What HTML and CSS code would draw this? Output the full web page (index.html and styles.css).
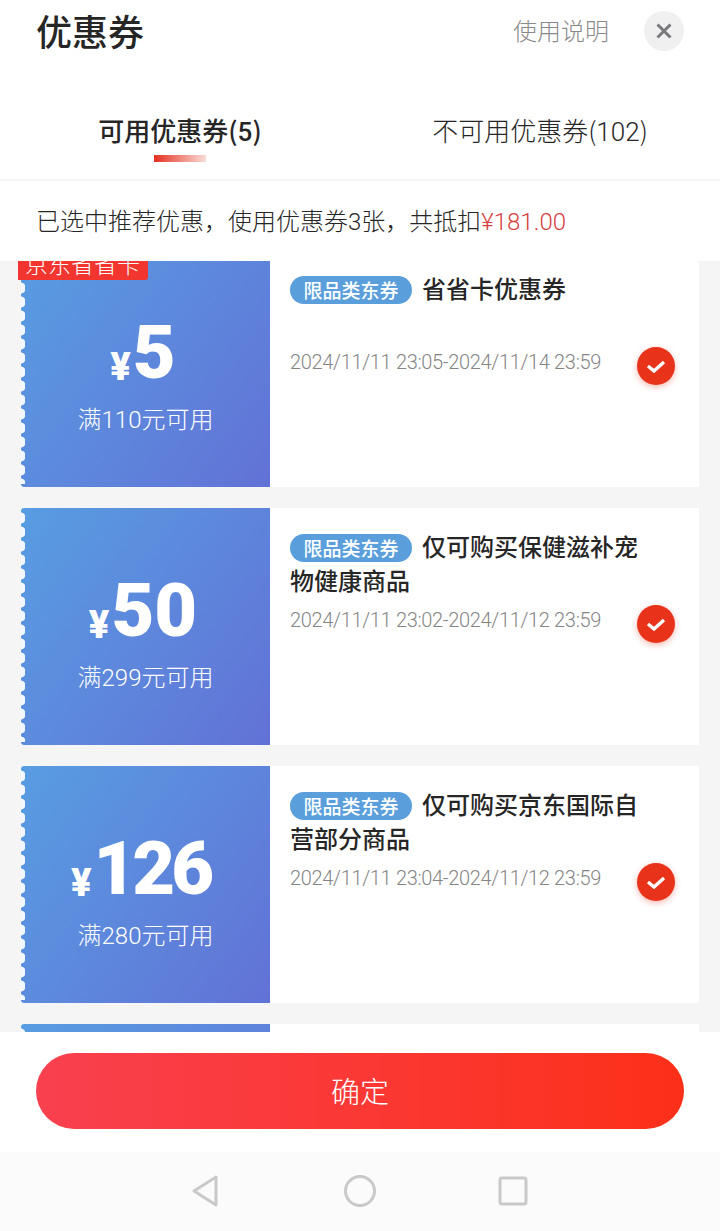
FILE: index.html
```html
<!DOCTYPE html>
<html lang="zh-CN">

<head>
  <meta charset="utf-8">
  <title>优惠券</title>
  <link rel="stylesheet" href="styles.css">
</head>

<body>
  <div id="sheet">
    <div id="head">
      <h1 id="title">优惠券</h1>
      <a id="help">使用说明</a>
      <button id="close" aria-label="关闭">
        <svg width="16" height="16" viewBox="0 0 16 16">
          <path d="M1.5 1.5L14.5 14.5M14.5 1.5L1.5 14.5" fill="none" stroke="#77797c" stroke-width="3" />
        </svg>
      </button>
    </div>
    <div id="tabs">
      <div class="tab on">可用优惠券(<span class="num">5</span>)</div>
      <div class="tab">不可用优惠券(<span class="num">102</span>)</div>
    </div>
    <div id="summary">已选中推荐优惠，使用优惠券<span class="num">3</span>张，共抵扣<span class="num red">¥181.00</span></div>

    <div id="list">
      <div class="card">
        <div class="flag">京东省省卡</div>
        <div class="ticket">
          <div class="price"><span class="yen">¥</span><span class="amount">5</span></div>
          <div class="limit">满<span class="num">110</span>元可用</div>
        </div>
        <div class="info">
          <div class="name"><span class="tag">限品类东券</span>省省卡优惠券</div>
          <div class="date first">2024/11/11 23:05-2024/11/14 23:59</div>
          <div class="check"><svg width="20" height="14" viewBox="0 0 20 14"><path d="M2 7L8 12L18 3" fill="none" stroke="#fff" stroke-width="3.4" /></svg></div>
        </div>
      </div>
      <div class="card">
        <div class="ticket">
          <div class="price"><span class="yen">¥</span><span class="amount">50</span></div>
          <div class="limit">满<span class="num">299</span>元可用</div>
        </div>
        <div class="info">
          <div class="name"><span class="tag">限品类东券</span>仅可购买保健滋补宠物健康商品</div>
          <div class="date">2024/11/11 23:02-2024/11/12 23:59</div>
          <div class="check"><svg width="20" height="14" viewBox="0 0 20 14"><path d="M2 7L8 12L18 3" fill="none" stroke="#fff" stroke-width="3.4" /></svg></div>
        </div>
      </div>
      <div class="card">
        <div class="ticket">
          <div class="price"><span class="yen">¥</span><span class="amount tight">126</span></div>
          <div class="limit">满<span class="num">280</span>元可用</div>
        </div>
        <div class="info">
          <div class="name"><span class="tag">限品类东券</span>仅可购买京东国际自营部分商品</div>
          <div class="date">2024/11/11 23:04-2024/11/12 23:59</div>
          <div class="check"><svg width="20" height="14" viewBox="0 0 20 14"><path d="M2 7L8 12L18 3" fill="none" stroke="#fff" stroke-width="3.4" /></svg></div>
        </div>
      </div>
      <div class="card">
        <div class="ticket"></div>
        <div class="info"></div>
      </div>
    </div>

    <div id="foot">
      <button id="ok">确定</button>
    </div>
    <div id="nav">
      <svg width="30" height="34" viewBox="0 0 30 34">
        <path d="M26 3L4 17L26 31Z" fill="none" stroke="#c9c9c9" stroke-width="3" stroke-linejoin="round" />
      </svg>
      <svg width="34" height="34" viewBox="0 0 34 34">
        <circle cx="17" cy="17" r="14.5" fill="none" stroke="#c9c9c9" stroke-width="3" />
      </svg>
      <svg class="square" width="30" height="30" viewBox="0 0 30 30">
        <rect x="2" y="2" width="26" height="26" rx="2" fill="none" stroke="#c9c9c9" stroke-width="3" />
      </svg>
    </div>
  </div>
</body>

</html>
```

FILE: styles.css
```css
* {
  box-sizing: border-box;
  margin: 0;
  padding: 0
}

html {
  font-family: 'Noto Sans CJK SC', sans-serif;
  color: #262626
}

body {
  width: 720px;
  height: 1231px;
  overflow: hidden;
  background: #fff
}

#sheet {
  height: 100%;
  display: flex;
  flex-direction: column
}

.num {
  font-family: Roboto, 'Noto Sans CJK SC', sans-serif
}

.red {
  color: #d8413f
}

#head {
  height: 63px;
  padding: 0 36px 2px;
  display: flex;
  align-items: center
}

#title {
  font-size: 36px;
  font-weight: 500;
  line-height: 40px;
  margin-bottom: 2px;
  flex: 1
}

#help {
  font-size: 24px;
  font-weight: 300;
  color: #8a8a8a;
  margin-right: 35px;
  margin-bottom: 2px
}

#close {
  width: 40px;
  height: 40px;
  border: none;
  border-radius: 50%;
  background: #f0f0f0;
  display: flex;
  align-items: center;
  justify-content: center
}

#tabs {
  height: 118px;
  display: flex;
  border-bottom: 2px solid #f5f5f5
}

.tab {
  flex: 1;
  padding-top: 46px;
  text-align: center;
  font-size: 26px;
  font-weight: 300;
  line-height: 42px;
  position: relative
}

.tab.on {
  font-weight: 500
}

.tab.on:after {
  content: '';
  position: absolute;
  left: 154px;
  top: 92px;
  width: 52px;
  height: 7px;
  background: linear-gradient(90deg, #e5301f, #f9dcd8)
}

#summary {
  height: 80px;
  padding: 0 36px;
  font-size: 24px;
  font-weight: 300;
  line-height: 78px;
  white-space: nowrap
}

#list {
  height: 771px;
  overflow: hidden;
  background: #f5f5f5;
  padding: 0 21px;
  display: flex;
  flex-direction: column;
  gap: 21px
}

.card {
  flex: none;
  height: 237px;
  display: flex;
  position: relative;
  background: #fff
}

.card:first-child {
  margin-top: -11px
}

.flag {
  position: absolute;
  z-index: 1;
  left: -3px;
  top: 0;
  width: 130px;
  height: 30px;
  padding-left: 7px;
  font-size: 23px;
  font-weight: 300;
  line-height: 26px;
  color: #fff;
  background: #f2352f;
  border-radius: 0 0 3px 0
}

.ticket {
  width: 249px;
  padding-top: 61px;
  background: linear-gradient(125deg, #589de2, #6272d6);
  border-radius: 3px 0 0 3px;
  color: #fff;
  text-align: center;
  position: relative
}

/* scalloped left edge */
.ticket:before {
  content: '';
  position: absolute;
  left: 0;
  top: 3px;
  bottom: 3px;
  width: 4px;
  background: radial-gradient(circle at -1px 7px, #f2f8fe 5.5px, transparent 6px) 0 0 / 4px 14px repeat-y
}

.price {
  height: 84px;
  padding-right: 5px;
  display: flex;
  align-items: flex-end;
  justify-content: center
}

.yen {
  font-family: Roboto, sans-serif;
  font-size: 38px;
  font-weight: 900;
  line-height: 34px;
  margin-right: 2px;
  margin-bottom: 11px
}

.amount {
  font-family: Roboto, sans-serif;
  font-size: 74px;
  font-weight: 900;
  line-height: 84px
}

.amount.tight {
  letter-spacing: -4px;
  margin-right: 5px
}

.limit {
  margin-top: 5px;
  font-size: 24px;
  font-weight: 300;
  line-height: 36px
}

.info {
  flex: 1;
  padding: 21px 50px 0 20px;
  position: relative
}

.name {
  font-size: 24px;
  font-weight: 500;
  line-height: 34px
}

.tag {
  display: inline-block;
  vertical-align: 0;
  width: 122px;
  height: 28px;
  margin-right: 10px;
  border-radius: 14px;
  background: #5a9fdc;
  color: #fff;
  text-align: center;
  font-size: 19px;
  font-weight: 500;
  line-height: 27px
}

.date {
  margin-top: 9px;
  font-family: Roboto, sans-serif;
  font-size: 20px;
  font-weight: 300;
  letter-spacing: -0.33px;
  line-height: 28px;
  color: #858585;
  white-space: nowrap
}

.date.first {
  margin-top: 43px
}

.check {
  position: absolute;
  right: 24px;
  top: 97px;
  width: 38px;
  height: 38px;
  border-radius: 50%;
  background: #e8321a;
  box-shadow: 0 2px 6px rgba(232, 50, 26, 0.35);
  display: flex;
  align-items: center;
  justify-content: center
}

#foot {
  height: 120px;
  padding: 21px 36px 0
}

#ok {
  display: block;
  width: 100%;
  height: 76px;
  border: none;
  border-radius: 38px;
  padding-bottom: 2px;
  background: linear-gradient(90deg, #f9404f, #fc3019);
  color: #fff;
  font: 300 29px 'Noto Sans CJK SC', sans-serif
}

#nav {
  height: 79px;
  background: #fbfbfb;
  display: flex;
  align-items: center;
  justify-content: center;
  gap: 123px;
  padding: 0 3px 2px 0
}

.square {
  margin-left: -2px
}
```
